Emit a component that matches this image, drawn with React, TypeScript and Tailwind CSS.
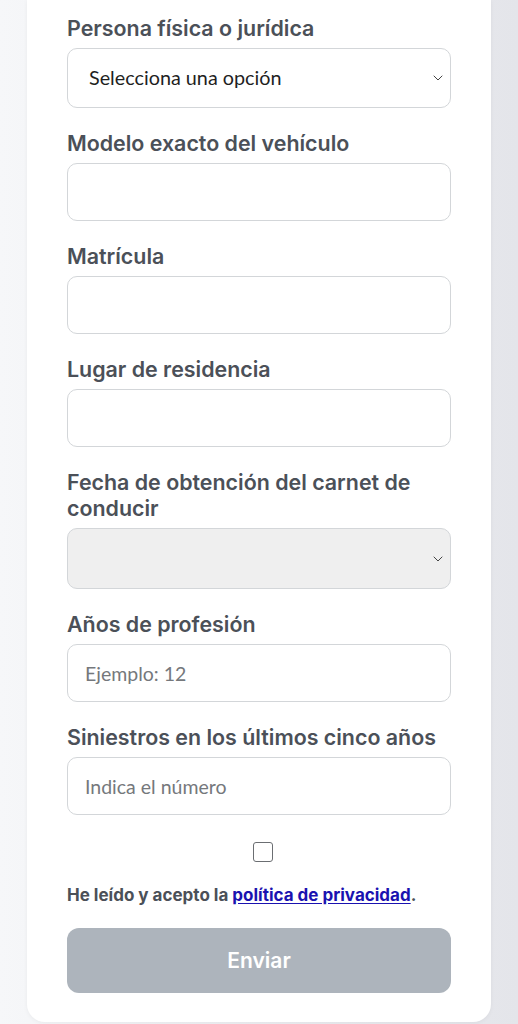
import React from "react";

const labelCls =
  "block text-[21.4px] leading-[26px] font-semibold text-[#4b5058] mb-[7px]";

function Chevron() {
  return (
    <svg
      width="10"
      height="6"
      viewBox="0 0 10 6"
      fill="none"
      className="absolute right-[8px] top-1/2 -translate-y-1/2 pointer-events-none"
    >
      <path d="M1 1l4 4 4-4" stroke="#444" strokeWidth="1" strokeLinecap="round" strokeLinejoin="round" />
    </svg>
  );
}

function Field({ label, children }: { label: React.ReactNode; children: React.ReactNode }) {
  return (
    <div className="mb-[22px]">
      <label className={labelCls}>{label}</label>
      {children}
    </div>
  );
}

function TextInput({ placeholder }: { placeholder?: string }) {
  return (
    <input
      type="text"
      placeholder={placeholder}
      className="block w-full h-[58px] rounded-[10px] border border-[#d3d6d9] bg-white px-[17px] text-[19.5px] text-[#222] placeholder:text-[#75787c] outline-none"
      style={{ fontFamily: "Lato, 'Noto Sans', sans-serif" }}
    />
  );
}

export default function App() {
  return (
    <div
      className="min-h-[1024px] bg-gradient-to-r from-[#f6f7f9] to-[#e4e5ea]"
      style={{ fontFamily: "Inter, 'Noto Sans', sans-serif" }}
    >
      <div className="ml-[27px] w-[464px] h-[1022px] bg-white rounded-b-[18px] shadow-[0_1px_4px_rgba(0,0,0,0.05)] px-[40px] pt-[15px]">
        <Field label="Persona física o jurídica">
          <div className="relative">
            <div
              className="flex items-center h-[60px] rounded-[10px] border border-[#d3d6d9] bg-white pl-[21px] text-[19.8px] text-[#1f1f1f]"
              style={{ fontFamily: "Lato, 'Noto Sans', sans-serif" }}
            >
              Selecciona una opción
            </div>
            <Chevron />
          </div>
        </Field>

        <Field label="Modelo exacto del vehículo">
          <TextInput />
        </Field>

        <Field label="Matrícula">
          <TextInput />
        </Field>

        <Field label="Lugar de residencia">
          <TextInput />
        </Field>

        <Field label="Fecha de obtención del carnet de conducir">
          <div className="relative">
            <div className="h-[61px] rounded-[10px] border border-[#d3d6d9] bg-[#efefef]" />
            <Chevron />
          </div>
        </Field>

        <Field label="Años de profesión">
          <TextInput placeholder="Ejemplo: 12" />
        </Field>

        <Field label="Siniestros en los últimos cinco años">
          <TextInput placeholder="Indica el número" />
        </Field>

        <div className="flex justify-center pl-[8px] mt-[27px]">
          <span className="block w-[20px] h-[20px] rounded-[3px] border-[1.5px] border-[#6b6e72] bg-white" />
        </div>

        <p className="mt-[23px] text-[17px] leading-[20px] font-bold text-[#4b5058]">
          He leído y acepto la{" "}
          <a href="#" className="text-[#1a12b0] underline underline-offset-2">
            política de privacidad
          </a>
          .
        </p>

        <button
          type="button"
          className="mt-[23px] w-full h-[65px] rounded-[12px] bg-[#adb4bc] text-white text-[21px] font-semibold"
        >
          Enviar
        </button>
      </div>
    </div>
  );
}
